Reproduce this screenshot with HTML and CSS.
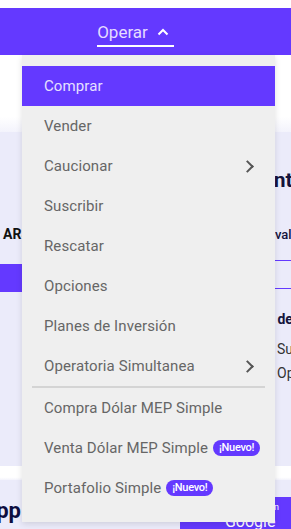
FILE: index.html
```html
<!DOCTYPE html>
<html lang="es">
<head>
    <meta charset="UTF-8">
    <meta name="viewport" content="width=device-width, initial-scale=1.0">
    <title>Operar</title>
    <link rel="stylesheet" href="styles.css">
</head>
<body>
    <div class="topbar"></div>
    <header class="nav">
        <a class="nav-link">
            Operar
            <svg class="caret" width="12" height="8" viewBox="0 0 12 8"><path d="M1.5 6.5 L6 2 L10.5 6.5" fill="none" stroke="#fff" stroke-width="2"/></svg>
        </a>
    </header>

    <div class="band"></div>
    <main class="content">
        <div class="col-left">
            <div class="price">AR$</div>
            <div class="tab-bar"></div>
        </div>
        <div class="col-right">
            <h2 class="title">Cuenta</h2>
            <div class="sub">Ver valores</div>
            <div class="tabs"></div>
            <div class="small-title">Más de 100</div>
            <div class="line">Suscribí</div>
            <div class="line">Operá</div>
        </div>
    </main>
    <div class="band band-small"></div>
    <section class="apps">
        <div class="apps-title"><span>App</span></div>
        <div class="store">
            <svg class="store-icon" width="14" height="16" viewBox="0 0 14 16"><path d="M2 1.5 L12 8 L2 14.5 Z" fill="none" stroke="#fff" stroke-width="1.6" stroke-linejoin="round"/></svg>
            <span class="store-text"><small>Disponible en</small>Google Play</span>
        </div>
    </section>

    <nav class="menu">
        <a class="item active">Comprar</a>
        <a class="item">Vender</a>
        <a class="item">Caucionar <span class="arrow"></span></a>
        <a class="item">Suscribir</a>
        <a class="item">Rescatar</a>
        <a class="item">Opciones</a>
        <a class="item">Planes de Inversión</a>
        <a class="item">Operatoria Simultanea <span class="arrow"></span></a>
        <hr class="divider">
        <a class="item">Compra Dólar MEP Simple</a>
        <a class="item">Venta Dólar MEP Simple <span class="badge">¡Nuevo!</span></a>
        <a class="item">Portafolio Simple <span class="badge">¡Nuevo!</span></a>
    </nav>
</body>
</html>
```

FILE: styles.css
```css
body {
    margin: 0;
    font-family: Roboto, "Liberation Sans", sans-serif;
    background-color: #fff;
    overflow: hidden;
    position: relative;
    height: 529px;
}
.topbar {
    height: 8px;
    background-color: #fff;
}
.nav {
    height: 47px;
    background-color: #6439ff;
    display: flex;
    justify-content: center;
    padding-right: 20px;
}
.nav-link {
    display: flex;
    align-items: flex-end;
    gap: 9px;
    height: 39px;
    padding: 0 5px 3px 0;
    color: #e4dcff;
    font-size: 17px;
    border-bottom: 2px solid #fff;
    box-sizing: border-box;
}
.caret {
    margin-bottom: 6px;
}
.band {
    height: 77px;
    background: linear-gradient(#fff, #fff 80%, #f3f3fc);
}
.band-small {
    height: 14px;
}
.content {
    display: grid;
    grid-template-columns: 225px 66px;
    height: 334px;
    background-color: #ebebfa;
    white-space: nowrap;
    overflow: hidden;
}
.col-left {
    padding-top: 94px;
    padding-left: 3px;
}
.price {
    font-size: 14px;
    font-weight: bold;
    color: #111;
    height: 38px;
}
.tab-bar {
    margin-left: -3px;
    height: 28px;
    background-color: #6439ff;
}
.col-right {
    padding-top: 36px;
    color: #14143c;
    overflow: hidden;
}
.title {
    margin: 0;
    padding-left: 12px;
    font-size: 21px;
    height: 59px;
}
.sub {
    padding-left: 27px;
    font-size: 13px;
    font-weight: 500;
    height: 33px;
}
.tabs {
    height: 27px;
    border-top: 1px solid #6439ff;
    border-bottom: 1px solid #6439ff;
}
.small-title {
    margin-top: 22px;
    padding-left: 22px;
    font-size: 14px;
    font-weight: bold;
    height: 30px;
}
.line {
    padding-left: 52px;
    font-size: 14px;
    color: #333;
    height: 24px;
}
.apps {
    display: grid;
    grid-template-columns: 180px 1fr;
    height: 49px;
    background-color: #ebebfa;
    overflow: hidden;
}
.apps-title {
    display: flex;
    justify-content: flex-end;
    width: 21px;
    padding-top: 18px;
    font-size: 22px;
    font-weight: bold;
    color: #0d0d40;
    white-space: nowrap;
}
.store {
    margin-top: 17px;
    background-color: #6439ff;
    display: flex;
    gap: 6px;
    padding: 5px 0 0 28px;
    color: #fff;
}
.store-icon {
    margin-top: 6px;
}
.store-text {
    font-size: 16px;
    display: flex;
    flex-direction: column;
}
.store-text small {
    font-size: 9px;
}

.menu {
    position: absolute;
    top: 55px;
    left: 22px;
    width: 253px;
    padding: 11px 0 14px;
    background-color: #efefef;
    box-shadow: 0 2px 6px rgba(0, 0, 0, 0.12);
    display: flex;
    flex-direction: column;
}
.item {
    height: 40px;
    display: flex;
    align-items: center;
    padding-left: 22px;
    padding-right: 20px;
    font-size: 15px;
    color: #666;
    letter-spacing: 0.1px;
    white-space: nowrap;
}
.item.active {
    background-color: #6439ff;
    color: #e6e0ff;
}
.arrow {
    margin-left: auto;
    width: 7px;
    height: 7px;
    border-top: 2px solid #555;
    border-right: 2px solid #555;
    transform: rotate(45deg);
    margin-right: 3px;
}
.divider {
    margin: 0 10px;
    height: 2px;
    border: 0;
    background-color: #d4d4d4;
}
.badge {
    margin-left: 5px;
    height: 16px;
    padding: 0 6px;
    border-radius: 8px;
    background-color: #6439ff;
    color: #fff;
    font-size: 11px;
    font-weight: 500;
    letter-spacing: -0.3px;
    line-height: 16px;
}
```
